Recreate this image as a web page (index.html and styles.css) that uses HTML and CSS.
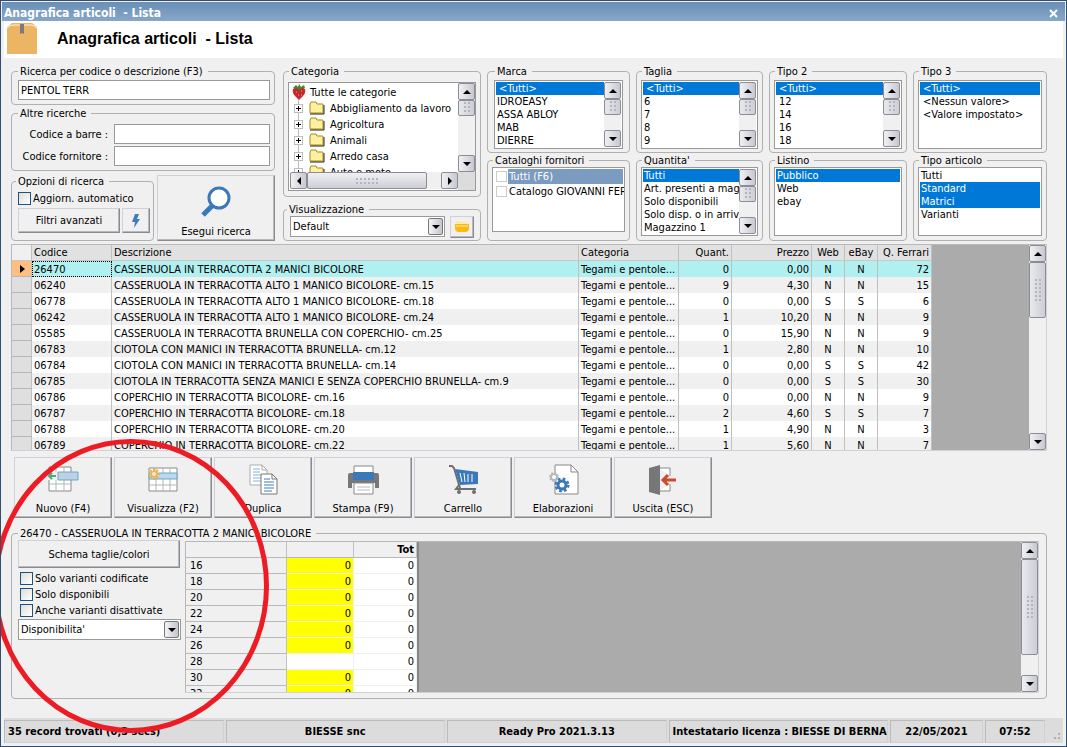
FILE: index.html
```html
<!DOCTYPE html>
<html lang="it">
<head>
  <meta charset="UTF-8">
  <title>Anagrafica articoli - Lista</title>
  <link rel="stylesheet" href="styles.css">
</head>
<body>
  <div class="window">
    <div class="titlebar">
      <span>Anagrafica articoli&nbsp; - Lista</span>
      <button class="close" aria-label="Chiudi">
        <svg width="9" height="9" viewBox="0 0 9 9"><path d="M1 1l7 7M8 1l-7 7" stroke="#fff" stroke-width="2"/></svg>
      </button>
    </div>

    <header class="page-header">
      <svg class="box-icon" width="30" height="31" viewBox="0 0 30 31">
        <path d="M5 0h20l5 4v27H0V4z" fill="#ebb563"/>
        <path d="M0 5q3-3 6-3h18q3 0 6 3" fill="none" stroke="#fff3dc" stroke-width="1"/>
        <path d="M13 1h4v10l-2-1-2 1z" fill="#7d7b78"/>
      </svg>
      <h1>Anagrafica articoli&nbsp; - Lista</h1>
    </header>

    <main class="content">
      <section class="filters">
        <div class="search-col">
          <fieldset class="group search-group">
            <legend>Ricerca per codice o descrizione (F3)</legend>
            <input type="text" class="field" value="PENTOL TERR" aria-label="Ricerca">
          </fieldset>
          <fieldset class="group other-group">
            <legend>Altre ricerche</legend>
            <label for="barcode">Codice a barre :</label>
            <input type="text" class="field" id="barcode">
            <label for="supplier">Codice fornitore :</label>
            <input type="text" class="field" id="supplier">
          </fieldset>
          <div class="search-actions">
            <fieldset class="group options-group">
              <legend>Opzioni di ricerca</legend>
              <label class="check"><input type="checkbox">Aggiorn. automatico</label>
              <div class="options-buttons">
                <button class="btn">Filtri avanzati</button>
                <button class="btn btn-flash" aria-label="Filtro rapido">
                  <svg width="10" height="16" viewBox="0 0 10 16"><path d="M4 1h4L6 6h3L3 15l1-6H1z" fill="#3d7cc0"/></svg>
                </button>
              </div>
            </fieldset>
            <button class="btn btn-search">
              <svg width="32" height="32" viewBox="0 0 32 32">
                <path d="M12 20L3 29" stroke="#3a78ba" stroke-width="5"/>
                <circle cx="19" cy="12" r="10" fill="#fff" stroke="#3a78ba" stroke-width="3"/>
              </svg>
              <span>Esegui ricerca</span>
            </button>
          </div>
        </div>

        <div class="category-col">
          <fieldset class="group category-group">
            <legend>Categoria</legend>
            <div class="tree-box">
              <div class="tree-main">
                <ul class="tree">
                  <li class="root">
                    <svg width="14" height="16" viewBox="0 0 14 16">
                      <path d="M1 5q-1 4 2 7l4 4 4-4q3-3 2-7-2-2-6-1-4-1-6 1z" fill="#c5282a"/>
                      <path d="M1 4l3-3 2 2 1-3 2 3 3-2 1 3-3 0-3 2-3-2z" fill="#4b8230"/>
                      <path d="M4 8h1M9 7h1M6 11h1M9 11h1" stroke="#f0a080"/>
                    </svg>Tutte le categorie
                  </li>
                  <li><button class="expand" aria-label="Espandi"></button><svg class="folder" width="16" height="14"><use href="#folder"/></svg>Abbigliamento da lavoro</li>
                  <li><button class="expand" aria-label="Espandi"></button><svg class="folder" width="16" height="14"><use href="#folder"/></svg>Agricoltura</li>
                  <li><button class="expand" aria-label="Espandi"></button><svg class="folder" width="16" height="14"><use href="#folder"/></svg>Animali</li>
                  <li><button class="expand" aria-label="Espandi"></button><svg class="folder" width="16" height="14"><use href="#folder"/></svg>Arredo casa</li>
                  <li><button class="expand" aria-label="Espandi"></button><svg class="folder" width="16" height="14"><use href="#folder"/></svg>Auto e moto</li>
                </ul>
                <div class="hscroll">
                  <button class="sb left" aria-label="Sinistra"></button>
                  <div class="track"><div class="thumb"></div></div>
                  <button class="sb right" aria-label="Destra"></button>
                </div>
              </div>
              <div class="vscroll tree-scroll">
                <button class="sb up" aria-label="Su"></button>
                <div class="track"><div class="thumb"></div></div>
                <button class="sb down" aria-label="Giù"></button>
              </div>
            </div>
          </fieldset>
          <fieldset class="group view-group">
            <legend>Visualizzazione</legend>
            <div class="combo">
              <select aria-label="Visualizzazione"><option>Default</option></select>
              <span class="combo-arrow"></span>
            </div>
            <button class="btn btn-folder" aria-label="Apri">
              <svg width="16" height="14" viewBox="0 0 16 14">
                <path d="M2 1h5l1 1h6v6H2z" fill="#ffe9a8"/>
                <path d="M1 4h14v4q0 4-4 4H5q-4 0-4-4z" fill="#fdb813"/>
                <path d="M2 5h12v2H2z" fill="#ffd65c"/>
              </svg>
            </button>
          </fieldset>
        </div>

        <div class="list-col">
          <fieldset class="group list-group marca-group">
            <legend>Marca</legend>
            <div class="listbox">
              <select size="5" aria-label="Marca">
                <option class="any" selected>&lt;Tutti&gt;</option>
                <option>IDROEASY</option>
                <option>ASSA ABLOY</option>
                <option>MAB</option>
                <option>DIERRE</option>
              </select>
              <div class="vscroll">
                <button class="sb up" aria-label="Su"></button>
                <div class="track"><div class="thumb"></div></div>
                <button class="sb down" aria-label="Giù"></button>
              </div>
            </div>
          </fieldset>
          <fieldset class="group list-group">
            <legend>Cataloghi fornitori</legend>
            <div class="catalogs">
              <label class="catalog active"><input type="checkbox"><span>Tutti (F6)</span></label>
              <label class="catalog"><input type="checkbox"><span>Catalogo GIOVANNI FERRARI</span></label>
            </div>
          </fieldset>
        </div>

        <div class="list-col">
          <fieldset class="group list-group">
            <legend>Taglia</legend>
            <div class="listbox">
              <select size="5" aria-label="Taglia">
                <option class="any" selected>&lt;Tutti&gt;</option>
                <option>6</option>
                <option>7</option>
                <option>8</option>
                <option>9</option>
              </select>
              <div class="vscroll">
                <button class="sb up" aria-label="Su"></button>
                <div class="track"><div class="thumb"></div></div>
                <button class="sb down" aria-label="Giù"></button>
              </div>
            </div>
          </fieldset>
          <fieldset class="group list-group">
            <legend>Quantita'</legend>
            <div class="listbox">
              <select size="5" aria-label="Quantita'">
                <option selected>Tutti</option>
                <option>Art. presenti a magazzino</option>
                <option>Solo disponibili</option>
                <option>Solo disp. o in arrivo</option>
                <option>Magazzino 1</option>
              </select>
              <div class="vscroll">
                <button class="sb up" aria-label="Su"></button>
                <div class="track"><div class="thumb"></div></div>
                <button class="sb down" aria-label="Giù"></button>
              </div>
            </div>
          </fieldset>
        </div>

        <div class="list-col">
          <fieldset class="group list-group">
            <legend>Tipo 2</legend>
            <div class="listbox">
              <select size="5" aria-label="Tipo 2">
                <option class="any" selected>&lt;Tutti&gt;</option>
                <option class="any">12</option>
                <option class="any">14</option>
                <option class="any">16</option>
                <option class="any">18</option>
              </select>
              <div class="vscroll">
                <button class="sb up" aria-label="Su"></button>
                <div class="track"><div class="thumb"></div></div>
                <button class="sb down" aria-label="Giù"></button>
              </div>
            </div>
          </fieldset>
          <fieldset class="group list-group">
            <legend>Listino</legend>
            <div class="listbox">
              <select size="5" aria-label="Listino">
                <option selected>Pubblico</option>
                <option>Web</option>
                <option>ebay</option>
              </select>
            </div>
          </fieldset>
        </div>

        <div class="list-col">
          <fieldset class="group list-group">
            <legend>Tipo 3</legend>
            <div class="listbox">
              <select size="5" aria-label="Tipo 3">
                <option class="any" selected>&lt;Tutti&gt;</option>
                <option class="any">&lt;Nessun valore&gt;</option>
                <option class="any">&lt;Valore impostato&gt;</option>
              </select>
            </div>
          </fieldset>
          <fieldset class="group list-group">
            <legend>Tipo articolo</legend>
            <div class="listbox">
              <select size="5" multiple aria-label="Tipo articolo">
                <option>Tutti</option>
                <option selected>Standard</option>
                <option selected>Matrici</option>
                <option>Varianti</option>
              </select>
            </div>
          </fieldset>
        </div>
      </section>

      <section class="grid-box articles-box">
        <div class="grid-view">
          <table class="articles">
            <colgroup>
              <col class="c-mark"><col class="c-code"><col class="c-desc"><col class="c-cat"><col class="c-qty">
              <col class="c-price"><col class="c-flag"><col class="c-flag"><col class="c-ferr">
            </colgroup>
            <thead>
              <tr><th></th><th>Codice</th><th>Descrizione</th><th>Categoria</th><th>Quant.</th><th>Prezzo</th><th>Web</th><th>eBay</th><th>Q. Ferrari</th></tr>
            </thead>
            <tbody>
              <tr class="current"><td></td><td>26470</td><td>CASSERUOLA IN TERRACOTTA 2 MANICI BICOLORE</td><td>Tegami e pentole...</td><td>0</td><td>0,00</td><td>N</td><td>N</td><td>72</td></tr>
              <tr><td></td><td>06240</td><td>CASSERUOLA IN TERRACOTTA ALTO 1 MANICO BICOLORE- cm.15</td><td>Tegami e pentole...</td><td>9</td><td>4,30</td><td>N</td><td>N</td><td>15</td></tr>
              <tr><td></td><td>06778</td><td>CASSERUOLA IN TERRACOTTA ALTO 1 MANICO BICOLORE- cm.18</td><td>Tegami e pentole...</td><td>0</td><td>0,00</td><td>S</td><td>S</td><td>6</td></tr>
              <tr><td></td><td>06242</td><td>CASSERUOLA IN TERRACOTTA ALTO 1 MANICO BICOLORE- cm.24</td><td>Tegami e pentole...</td><td>1</td><td>10,20</td><td>N</td><td>N</td><td>9</td></tr>
              <tr><td></td><td>05585</td><td>CASSERUOLA IN TERRACOTTA BRUNELLA CON COPERCHIO- cm.25</td><td>Tegami e pentole...</td><td>0</td><td>15,90</td><td>N</td><td>N</td><td>9</td></tr>
              <tr><td></td><td>06783</td><td>CIOTOLA CON MANICI IN TERRACOTTA BRUNELLA- cm.12</td><td>Tegami e pentole...</td><td>1</td><td>2,80</td><td>N</td><td>N</td><td>10</td></tr>
              <tr><td></td><td>06784</td><td>CIOTOLA CON MANICI IN TERRACOTTA BRUNELLA- cm.14</td><td>Tegami e pentole...</td><td>0</td><td>0,00</td><td>S</td><td>S</td><td>42</td></tr>
              <tr><td></td><td>06785</td><td>CIOTOLA IN TERRACOTTA SENZA MANICI E SENZA COPERCHIO BRUNELLA- cm.9</td><td>Tegami e pentole...</td><td>0</td><td>0,00</td><td>S</td><td>S</td><td>30</td></tr>
              <tr><td></td><td>06786</td><td>COPERCHIO IN TERRACOTTA BICOLORE- cm.16</td><td>Tegami e pentole...</td><td>0</td><td>0,00</td><td>N</td><td>N</td><td>9</td></tr>
              <tr><td></td><td>06787</td><td>COPERCHIO IN TERRACOTTA BICOLORE- cm.18</td><td>Tegami e pentole...</td><td>2</td><td>4,60</td><td>S</td><td>S</td><td>7</td></tr>
              <tr><td></td><td>06788</td><td>COPERCHIO IN TERRACOTTA BICOLORE- cm.20</td><td>Tegami e pentole...</td><td>1</td><td>4,90</td><td>N</td><td>N</td><td>3</td></tr>
              <tr><td></td><td>06789</td><td>COPERCHIO IN TERRACOTTA BICOLORE- cm.22</td><td>Tegami e pentole...</td><td>1</td><td>5,60</td><td>N</td><td>N</td><td>7</td></tr>
            </tbody>
          </table>
        </div>
        <div class="vscroll">
          <button class="sb up" aria-label="Su"></button>
          <div class="track"><div class="thumb thumb-articles"></div></div>
          <button class="sb down" aria-label="Giù"></button>
        </div>
      </section>

      <nav class="toolbar">
        <button class="btn tool">
          <svg width="32" height="32" viewBox="0 0 32 32">
            <path d="M2 3h22v24H2z" fill="#fff" stroke="#8a8a8a"/>
            <path d="M9 3v24M17 3v24M2 20h22" stroke="#b5b5b5" fill="none"/>
            <path d="M0 8h11v8H0z" fill="#efefef"/>
            <path d="M11 8h20v8H11z" fill="#bcd0e6" stroke="#64a9c8"/>
            <path d="M2 12h7M5 9l-3 3 3 3" stroke="#4eab7d" stroke-width="2" fill="none"/>
          </svg>
          <span>Nuovo (F4)</span>
        </button>
        <button class="btn tool">
          <svg width="32" height="32" viewBox="0 0 32 32">
            <path d="M2 4h28v23H2z" fill="#fff" stroke="#8a8a8a"/>
            <path d="M9 4v23M16 4v23M23 4v23M2 21h28" stroke="#b5b5b5" fill="none"/>
            <path d="M2 9h28v6H2z" fill="#bcd8ea" stroke="#64a9c8"/>
            <path d="M7 4v12M1 10h12M3 6l8 8M11 6l-8 8" stroke="#eeb050" stroke-width="2"/>
            <circle cx="7" cy="10" r="2" fill="#fff0c8"/>
          </svg>
          <span>Visualizza (F2)</span>
        </button>
        <button class="btn tool">
          <svg width="32" height="32" viewBox="0 0 32 32">
            <path d="M3 1h12l5 5v15H3z" fill="#fff" stroke="#aaa"/>
            <path d="M15 1v5h5" fill="none" stroke="#aaa"/>
            <path d="M6 5h7M6 8h7M6 11h8M6 14h8M6 17h8" stroke="#85b1dc"/>
            <path d="M14 10h11l5 5v15H14z" fill="#fff" stroke="#777"/>
            <path d="M25 10v5h5" fill="none" stroke="#777"/>
            <path d="M17 15h6M17 18h10M17 21h10M17 24h10M17 27h8" stroke="#3d7cc0"/>
          </svg>
          <span>Duplica</span>
        </button>
        <button class="btn tool">
          <svg width="32" height="32" viewBox="0 0 32 32">
            <path d="M3 9h27q2 0 2 2v13h-4v-5H5v5H1V11q0-2 2-2z" fill="#77777a"/>
            <path d="M7 2h19v7H7z" fill="#fff" stroke="#888"/>
            <path d="M6 8h21v8H6z" fill="#3a78ba"/>
            <path d="M7 19h19v11H7z" fill="#fff" stroke="#888"/>
            <path d="M10 23h13M10 26h13" stroke="#bbb"/>
          </svg>
          <span>Stampa (F9)</span>
        </button>
        <button class="btn tool">
          <svg width="32" height="32" viewBox="0 0 32 32">
            <path d="M2 2h3l2 2 6 20" fill="none" stroke="#6e6e70" stroke-width="2"/>
            <path d="M8 5l23 3v12l-18 1z" fill="#3a78ba"/>
            <path d="M13 9l2 9M17 9l1 9M21 10v8M25 10v8" stroke="#fff"/>
            <path d="M12 21l-3 4h20" fill="none" stroke="#6e6e70" stroke-width="2"/>
            <circle cx="12" cy="28" r="2" fill="#6e6e70"/><circle cx="27" cy="28" r="2" fill="#6e6e70"/>
          </svg>
          <span>Carrello</span>
        </button>
        <button class="btn tool">
          <svg width="32" height="32" viewBox="0 0 32 32">
            <path d="M8 1h16l7 7v22H8z" fill="#fff" stroke="#888"/>
            <path d="M24 1v7h7" fill="none" stroke="#888"/>
            <circle cx="7" cy="13" r="3" fill="#fff" stroke="#b9b9b9" stroke-width="2"/>
            <circle cx="7" cy="13" r="4" fill="none" stroke="#b9b9b9" stroke-width="2" stroke-dasharray="1.600 1.540"/>
            <circle cx="15" cy="21" r="4" fill="#fff" stroke="#3a78ba" stroke-width="3"/>
            <circle cx="15" cy="21" r="6" fill="none" stroke="#3a78ba" stroke-width="3" stroke-dasharray="2.500 2.212"/>
          </svg>
          <span>Elaborazioni</span>
        </button>
        <button class="btn tool">
          <svg width="32" height="32" viewBox="0 0 32 32">
            <path d="M12 4h11v8M23 20v7H12" fill="#fff" stroke="#888"/>
            <path d="M2 4l11-3v30L2 28z" fill="#77777a"/>
            <path d="M16 16h13M21 11l-5 5 5 5" fill="none" stroke="#d0482f" stroke-width="3"/>
          </svg>
          <span>Uscita (ESC)</span>
        </button>
      </nav>

      <fieldset class="group detail-group">
        <legend>26470 - CASSERUOLA IN TERRACOTTA 2 MANICI BICOLORE</legend>
        <div class="detail">
          <div class="detail-options">
            <button class="btn">Schema taglie/colori</button>
            <label class="check"><input type="checkbox">Solo varianti codificate</label>
            <label class="check"><input type="checkbox">Solo disponibili</label>
            <label class="check"><input type="checkbox">Anche varianti disattivate</label>
            <div class="combo">
              <select aria-label="Tipo di dato"><option>Disponibilita'</option></select>
              <span class="combo-arrow"></span>
            </div>
          </div>
          <div class="grid-box sizes-box">
            <div class="grid-view">
              <table class="sizes">
                <colgroup><col class="c-size"><col class="c-avail"><col class="c-tot"></colgroup>
                <thead><tr><th></th><th></th><th>Tot</th></tr></thead>
                <tbody>
                  <tr><th>16</th><td class="hl">0</td><td>0</td></tr>
                  <tr><th>18</th><td class="hl">0</td><td>0</td></tr>
                  <tr><th>20</th><td class="hl">0</td><td>0</td></tr>
                  <tr><th>22</th><td class="hl">0</td><td>0</td></tr>
                  <tr><th>24</th><td class="hl">0</td><td>0</td></tr>
                  <tr><th>26</th><td class="hl">0</td><td>0</td></tr>
                  <tr><th>28</th><td></td><td>0</td></tr>
                  <tr><th>30</th><td class="hl">0</td><td>0</td></tr>
                  <tr><th>32</th><td class="hl">0</td><td>0</td></tr>
                </tbody>
              </table>
            </div>
            <div class="vscroll">
              <button class="sb up" aria-label="Su"></button>
              <div class="track"><div class="thumb thumb-sizes"></div></div>
              <button class="sb down" aria-label="Giù"></button>
            </div>
          </div>
        </div>
      </fieldset>
    </main>

    <footer class="statusbar">
      <div class="panel wide left">35 record trovati (0,3 secs)</div>
      <div class="panel wide">BIESSE snc</div>
      <div class="panel wide">Ready Pro 2021.3.13</div>
      <div class="panel wide left">Intestatario licenza : BIESSE DI BERNARDI</div>
      <div class="panel date">22/05/2021</div>
      <div class="panel time">07:52</div>
      <svg class="grip" width="12" height="12" viewBox="0 0 12 12"><path d="M9 2h2v2H9zM9 6h2v2H9zM5 6h2v2H5z" fill="#b0b0b0"/></svg>
    </footer>

    <svg class="marker" width="274" height="300" viewBox="-4 436 274 300">
      <ellipse cx="131" cy="586" rx="135.500" ry="144.500" fill="none" stroke="#ed1c24" stroke-width="5"/>
    </svg>
  </div>

  <svg class="defs" width="0" height="0">
    <symbol id="folder" viewBox="0 0 16 14">
      <path d="M1 3l1-2h5l1 2h6v9H1z" fill="#fdf0a0" stroke="#a8891c"/>
      <path d="M2 12h12V4" fill="none" stroke="#e5c040"/>
      <path d="M1 13h14V4" fill="none" stroke="#222"/>
    </symbol>
  </svg>
</body>
</html>
```
FILE: styles.css
```css
* {
  box-sizing: border-box;
}
body {
  margin: 0;
  font: 11px/13px "DejaVu Sans Condensed", Tahoma, sans-serif;
  color: #000;
  background: #f0f0f0;
}
button, input, select {
  font: inherit;
  color: inherit;
  margin: 0;
  padding: 0;
  border-radius: 0;
}
.defs {
  position: absolute;
}

/* window */
.window {
  position: relative;
  display: flex;
  flex-direction: column;
  min-height: 100vh;
  padding: 1px 3px 3px;
  border: 1px solid #2f4f70;
  background: #f0f0f0;
  overflow: hidden;
}
.titlebar {
  display: flex;
  align-items: center;
  justify-content: space-between;
  height: 19px;
  margin: 0 -2px;
  padding: 3px 7px 0 2px;
  background: linear-gradient(#6a8eb5, #86a7ca);
  color: #fff;
  font-size: 12px;
  font-weight: bold;
}
.close {
  display: flex;
  padding: 0;
  border: 0;
  background: none;
}
.page-header {
  display: flex;
  align-items: flex-start;
  gap: 20px;
  height: 37px;
  padding: 2px 3px;
  background: #fff;
}
.page-header h1 {
  margin: 6px 0 0;
  font: bold 16px/20px "Liberation Sans", Arial, sans-serif;
}
.content {
  flex: 1;
  padding: 7px 16px 0 7px;
}

/* group boxes */
.group {
  min-width: 0;
  margin: 0;
  padding: 2px 4px 4px;
  border: 1px solid #b0b0b0;
  border-radius: 4px;
}
.group legend {
  height: 13px;
  margin-left: 1px;
  padding: 0 5px 0 2px;
  white-space: nowrap;
}
.filters {
  display: grid;
  grid-template-columns: 266fr 198fr 143fr 127fr 138fr 134fr;
  gap: 6px;
}
.search-col, .category-col, .list-col {
  display: flex;
  flex-direction: column;
  min-width: 0;
}
.search-col {
  gap: 2px;
  padding-right: 2px;
}
.search-group {
  padding-left: 6px;
}
.search-group legend, .other-group legend {
  margin-left: 0;
}
.field {
  width: 100%;
  height: 20px;
  padding: 0 2px;
  border: 1px solid #999;
  background: #fff;
}
.other-group {
  display: grid;
  grid-template-columns: 90px 1fr;
  align-items: center;
  gap: 2px 6px;
  padding: 4px 4px 4px 6px;
}
.other-group label {
  text-align: right;
  white-space: nowrap;
}
.search-actions {
  display: grid;
  flex: 1;
  grid-template-columns: 143fr 118fr;
  gap: 3px;
  margin-top: 2px;
}
.options-group {
  padding: 4px 3px 4px;
}
.check {
  display: flex;
  align-items: center;
  gap: 2px;
  white-space: nowrap;
}
.check input {
  appearance: none;
  flex: none;
  width: 13px;
  height: 13px;
  border: 1px solid #1c5180;
  background: linear-gradient(135deg, #dcdcd7, #fff);
}
.check:hover input {
  border-color: #3c8ac8;
}
.options-group .check {
  margin-left: 3px;
}
.options-buttons {
  display: flex;
  gap: 2px;
  margin-top: 3px;
  padding-left: 3px;
}
.options-buttons .btn {
  flex: 1;
  height: 25px;
}
.options-buttons .btn-flash {
  flex: none;
  width: 28px;
}
.btn {
  display: flex;
  align-items: center;
  justify-content: center;
  border: 1px solid;
  border-color: #d0d0d8 #8a8a90 #8a8a90 #d0d0d8;
  box-shadow: inset -1px -1px #b8b8bc;
  background: #f0f0f0;
  white-space: nowrap;
}
.btn:hover {
  background: #f8f8f8;
}
.btn-search, .tool {
  flex-direction: column;
  justify-content: flex-end;
}
.btn-search {
  gap: 7px;
  padding-bottom: 2px;
}

/* category tree */
.category-group {
  height: 132px;
  margin-bottom: 6px;
}
.tree-box {
  display: flex;
  height: 109px;
  margin-top: 2px;
  border: 1px solid #999;
  background: #fff;
}
.tree-main {
  display: flex;
  flex: 1;
  flex-direction: column;
  min-width: 0;
}
.tree {
  flex: 1;
  min-height: 0;
  margin: 0;
  padding: 1px 0 0 3px;
  list-style: none;
  overflow: hidden;
}
.tree li {
  display: flex;
  align-items: center;
  height: 16px;
  padding-left: 2px;
  background: linear-gradient(#bbb, #bbb) 6px 0 / 1px 100% no-repeat;
  white-space: nowrap;
}
.tree .root {
  gap: 4px;
  padding-left: 0;
  background: none;
}
.tree .folder {
  margin: 0 5px 0 6px;
}
.expand {
  width: 9px;
  height: 9px;
  border: 1px solid #bbb;
  background:
    linear-gradient(#000, #000) center / 5px 1px no-repeat,
    linear-gradient(#000, #000) center / 1px 5px no-repeat,
    #fff;
}
.tree-scroll {
  padding-bottom: 18px;
  background: #dcdcdc;
}
.hscroll {
  display: flex;
  height: 17px;
  margin: 0 0 1px 1px;
}
.hscroll .thumb {
  width: 120px;
  height: 17px;
}

/* list boxes */
.list-col {
  gap: 1px;
}
.list-group {
  height: 88px;
}
.list-group + .list-group {
  height: 87px;
  padding-top: 0;
}
.marca-group {
  padding-left: 6px;
  padding-right: 6px;
}
.listbox {
  display: flex;
  height: 69px;
  padding: 1px;
  border: 1px solid #999;
  background: #fff;
}
.listbox select {
  flex: 1;
  min-width: 0;
  height: 65px;
  border: 0;
  outline: 0;
  background: #fff;
  overflow: hidden;
  scrollbar-width: none;
}
.listbox option {
  height: 13px;
  min-height: 13px;
  padding: 0 0 0 1px;
  line-height: 13px;
}
.listbox .any {
  padding-left: 3px;
}
.listbox option:checked {
  background: #0078d7 linear-gradient(#0078d7, #0078d7);
  color: #fff;
  -webkit-text-fill-color: #fff;
}
.catalogs {
  height: 65px;
  padding: 1px;
  border: 1px solid #999;
  background: #fff;
  overflow: hidden;
}
.catalog {
  display: flex;
  align-items: center;
  gap: 1px;
  height: 15px;
  padding-left: 2px;
  white-space: nowrap;
}
.catalog input {
  appearance: none;
  flex: none;
  width: 11px;
  height: 11px;
  border: 1px solid #ccc;
  background: #fff;
}
.catalog span {
  flex: 1;
  padding-left: 1px;
  line-height: 15px;
}
.catalog.active span {
  background: #7b9bc0;
  color: #fff;
}

/* scrollbars */
.vscroll {
  display: flex;
  flex: none;
  flex-direction: column;
  width: 17px;
}
.sb {
  display: flex;
  flex: none;
  align-items: center;
  justify-content: center;
  width: 17px;
  height: 17px;
  border: 1px solid #8c8c94;
  border-radius: 2px;
  background: linear-gradient(90deg, #f0f0f4, #c8c8d2);
}
.sb::before {
  content: "";
  border: 4px solid transparent;
}
.up::before {
  border-top: 0;
  border-bottom-color: #000;
}
.down::before {
  border-bottom: 0;
  border-top-color: #000;
}
.sb.left::before {
  border-left: 0;
  border-right-color: #000;
}
.sb.right::before {
  border-right: 0;
  border-left-color: #000;
}
.track {
  flex: 1;
  background: #f0f0f0;
}
.thumb {
  display: flex;
  align-items: center;
  justify-content: center;
  height: 16px;
  border: 1px solid #8c8c94;
  border-radius: 2px;
  background: linear-gradient(90deg, #e8e8ee, #cdcdd6);
}
.hscroll .thumb {
  background: linear-gradient(#f0f0f4, #cdcdd6);
}
.thumb::before {
  content: "";
  width: 6px;
  height: 12px;
  background: radial-gradient(circle at 1px 1px, #b4b4bc 1px, transparent 1px) 0 0 / 4px 4px;
}
.hscroll .thumb::before {
  width: 22px;
  height: 6px;
}
.thumb-articles {
  height: 56px;
}
.thumb-sizes {
  height: 96px;
}
.thumb-articles::before, .thumb-sizes::before {
  height: 22px;
}

/* combo */
.view-group {
  display: flex;
  gap: 5px;
  height: 38px;
  padding: 0 6px 2px 6px;
}
.view-group legend {
  margin-left: -3px;
}
.combo {
  position: relative;
  flex: 1;
}
.combo select {
  appearance: none;
  display: block;
  width: 100%;
  height: 21px;
  padding: 0 2px;
  border: 1px solid #999;
  background: #fff;
}
.combo-arrow {
  position: absolute;
  top: 2px;
  right: 2px;
  display: flex;
  align-items: center;
  justify-content: center;
  width: 15px;
  height: 17px;
  border: 1px solid #777;
  border-radius: 2px;
  background: linear-gradient(90deg, #f4f4f8, #c4c4ce);
  pointer-events: none;
}
.combo-arrow::before {
  content: "";
  border: 4px solid transparent;
  border-top-color: #000;
  border-bottom: 0;
}
.btn-folder {
  width: 24px;
  height: 22px;
}

/* grids */
.grid-box {
  display: flex;
  border: 1px solid;
  border-color: #b8b8b8 #d0d0d8 #d0d0d8 #b8b8b8;
}
.grid-view {
  flex: 1;
  min-width: 0;
  background: #ababab;
  overflow: hidden;
}
.articles-box {
  height: 207px;
  margin-top: 3px;
}
table {
  table-layout: fixed;
  border-collapse: separate;
  border-spacing: 0;
}
th, td {
  height: 16px;
  padding: 0 2px;
  font-weight: normal;
  line-height: 15px;
  text-align: left;
  white-space: nowrap;
  overflow: hidden;
}
.articles {
  width: 920px;
}
.c-mark { width: 20px; }
.c-code { width: 80px; }
.c-cat { width: 100px; }
.c-qty { width: 53px; }
.c-price { width: 80px; }
.c-flag { width: 33px; }
.c-ferr { width: 54px; }
.articles th, .articles td {
  border-right: 1px solid #c0c0c0;
}
.articles th {
  background: #e1e1e1;
  border-bottom: 1px solid #c8c8c8;
}
.articles th:first-child {
  background: #f0f0f0;
}
.articles tr > :nth-child(n+5) {
  text-align: right;
}
.articles tr > :nth-child(7), .articles tr > :nth-child(8) {
  padding: 0;
  text-align: center;
}
.articles tbody tr {
  background: #fff;
}
.articles tbody tr:nth-child(even) {
  background: #f0f0f0;
}
.articles tbody tr.current {
  background: #b0f0f0;
}
.articles td:first-child {
  background: #dfdfdf;
  border-bottom: 1px solid #b8b8b8;
}
.articles .current td:first-child {
  padding-left: 8px;
  background: #ffbf80;
}
.current td:first-child::before {
  content: "";
  display: block;
  width: 0;
  border: 4px solid transparent;
  border-left: 5px solid #000;
  border-right: 0;
}
.current td:nth-child(2) {
  outline: 1px dotted #000;
  outline-offset: -1px;
}

/* toolbar */
.toolbar {
  display: flex;
  gap: 2px;
  margin: 6px 0 9px 3px;
}
.tool {
  width: 98px;
  height: 61px;
  gap: 6px;
  padding-bottom: 2px;
}

/* article detail */
.detail-group {
  padding: 0 7px 5px 6px;
}
.detail-group legend {
  margin-left: 0;
}
.detail {
  display: flex;
  gap: 4px;
}
.detail-options {
  display: flex;
  flex-direction: column;
  width: 163px;
}
.detail-options .btn {
  height: 28px;
  margin: 0 1px 2px 0;
}
.detail-options .check {
  height: 16px;
  padding-left: 2px;
}
.detail-options .combo {
  flex: none;
  margin-top: 1px;
}
.sizes-box {
  flex: 1;
  height: 152px;
  min-width: 0;
  margin-top: 1px;
}
.sizes {
  width: 233px;
  border-right: 2px solid #888;
  background: #fff;
}
.c-size { width: 101px; }
.c-avail { width: 67px; }
.sizes th {
  padding-left: 4px;
  border-right: 1px solid #c0c0c8;
  border-bottom: 1px solid #b8b8c0;
  background: #f0f0f0;
}
.sizes thead th {
  font-weight: bold;
  text-align: right;
}
.sizes td {
  border-right: 1px solid #f0f0f0;
  border-bottom: 1px solid #f0f0f0;
  text-align: right;
}
.sizes .hl {
  background: #ff0;
}

/* status bar */
.statusbar {
  display: flex;
  gap: 2px;
  padding: 2px 0 0;
  background: #dcdcdc;
  font-weight: bold;
}
.panel {
  height: 23px;
  padding: 0 3px;
  border: 1px solid;
  border-color: #bbb #d0d0d8 #d0d0d8 #bbb;
  line-height: 21px;
  text-align: center;
  white-space: nowrap;
  overflow: hidden;
}
.wide {
  flex: 1;
  min-width: 0;
}
.panel.left {
  text-align: left;
}
.date {
  width: 93px;
}
.time {
  width: 60px;
}
.grip {
  align-self: flex-end;
  width: 16px;
}

/* hand-drawn highlight over the variants area */
.marker {
  position: absolute;
  top: 435px;
  left: -5px;
  pointer-events: none;
}
```
